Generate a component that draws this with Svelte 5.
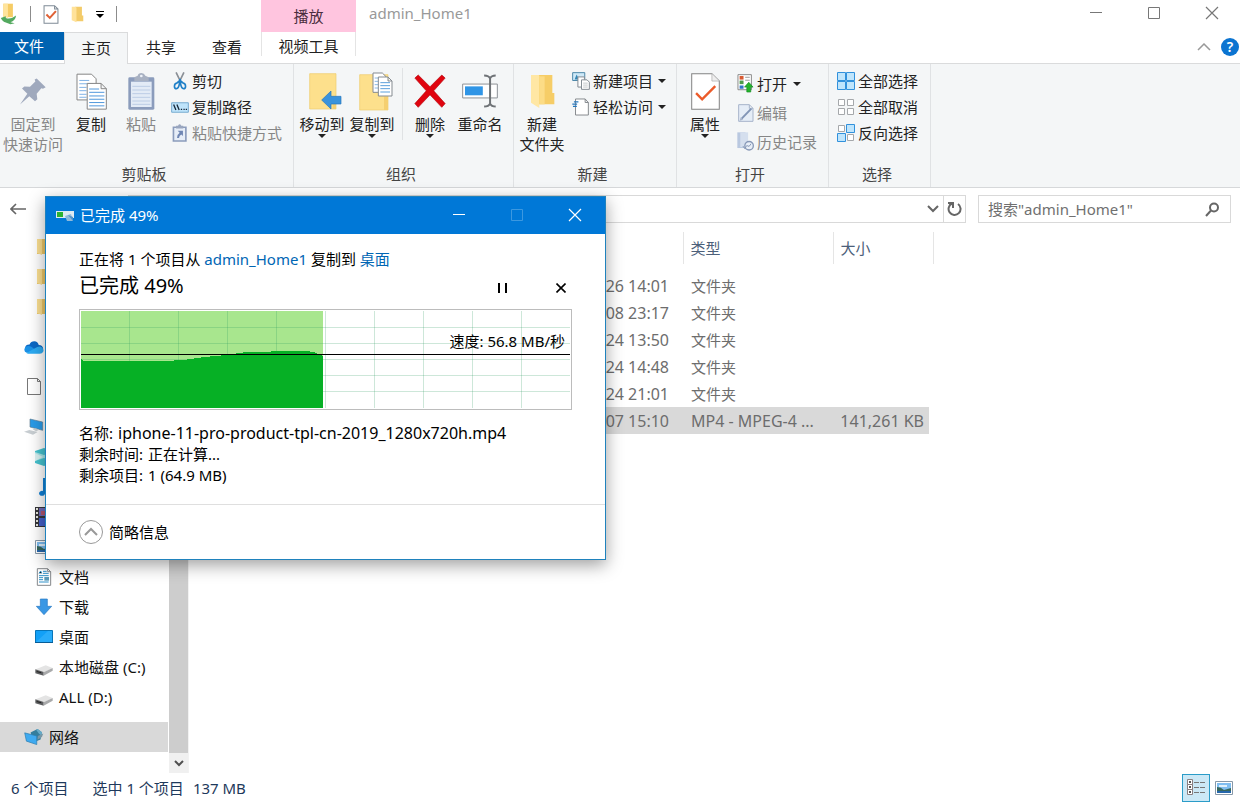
<script>
  const quickItems = ['folder', 'folder', 'folder'];
  const pcItems = [
    { icon: 'cube' },
    { icon: 'music' },
    { icon: 'video' },
    { icon: 'picture' },
    { icon: 'document', label: '文档' },
    { icon: 'download', label: '下载' },
    { icon: 'desktop', label: '桌面' },
    { icon: 'drive', label: '本地磁盘 (C:)' },
    { icon: 'drive', label: 'ALL (D:)' }
  ];
  const files = [
    { date: '26 14:01', type: '文件夹', size: '' },
    { date: '08 23:17', type: '文件夹', size: '' },
    { date: '24 13:50', type: '文件夹', size: '' },
    { date: '24 14:48', type: '文件夹', size: '' },
    { date: '24 21:01', type: '文件夹', size: '' },
    { date: '07 15:10', type: 'MP4 - MPEG-4 ...', size: '141,261 KB', selected: true }
  ];
  const gridX = [48, 97, 146, 195, 244, 293, 342, 391, 440];
  const gridY = [16, 32, 48, 64, 80];
</script>

{#snippet large(icon, lines, opts = {})}
  <button class="large" class:wide={opts.wide} class:off={opts.off} disabled={opts.off}>
    <span class="large-icon">{@render glyph(icon)}</span>
    {#each lines as line}<span class="line">{line}</span>{/each}
    {#if opts.menu}<span class="caret"></span>{/if}
  </button>
{/snippet}

{#snippet small(icon, label, opts = {})}
  <button class="small" class:off={opts.off} disabled={opts.off}>
    <span class="small-icon">{@render glyph(icon)}</span>
    <span>{label}</span>
    {#if opts.menu}<span class="caret side"></span>{/if}
  </button>
{/snippet}

{#snippet glyph(name)}
  {#if name === 'pin'}
    <svg width="26" height="27" viewBox="60 40 78 80"><path fill="#9fa9bd" d="M110 41 137 67l-8 5-5-2-14 17 2 16-7 6-17-15-28 25 22-32-16-16 7-6 17 1 16-16-2-6z" /></svg>
  {:else if name === 'copy'}
    <svg width="31" height="37" viewBox="226 25 94 111">
      <path fill="#fff" stroke="#858585" stroke-width="3" d="M229 28h44l14 14v64h-58z" />
      <path stroke="#7fb2e6" stroke-width="3" d="M236 47h30M236 57h43M236 68h22M236 78h22M236 89h22M236 98h22" />
      <path fill="#fff" stroke="#858585" stroke-width="3" d="M260 56h42l16 16v62h-58zM302 56v16h16" />
      <path stroke="#4f97dc" stroke-width="3" d="M266 73h30M266 83h46M266 94h46M266 104h46M266 114h46M266 124h46" />
    </svg>
  {:else if name === 'paste'}
    <svg width="27" height="37" viewBox="383 24 81 111">
      <rect x="384" y="37" width="78" height="97" rx="4" fill="#8b9cbc" />
      <path fill="#e3ebf6" d="M392 50h62v76h-62z" />
      <path stroke="#bccde5" stroke-width="3" d="M396 64h54M396 75h54M396 86h54M396 97h54M396 108h54M396 118h54" />
      <path fill="#a8b1c2" d="M402 48V37l10-5q2-8 11-8t12 8l10 5v11z" /><circle cx="423" cy="33" r="4" fill="#eef2f8" />
    </svg>
  {:else if name === 'cut'}
    <svg width="16" height="18" viewBox="514 25 46 55" fill="none">
      <path stroke="#8a8f96" stroke-width="5" d="M525 26l16 33M549 26l-16 33" />
      <path stroke="#1f80c8" stroke-width="5" d="M536 51l-9 8q-7 1-7 10 0 7 6 7 7-1 9-14zM538 51l9 8q7 1 7 10 0 7-6 7-7-1-9-14z" />
    </svg>
  {:else if name === 'path'}
    <svg width="18" height="11" viewBox="509 114 55 33">
      <path fill="#bfe4fb" stroke="#75a9cf" stroke-width="3" d="M511 116h51v29h-51z" />
      <path stroke="#16283a" stroke-width="4" d="M517 121l7 17M527 121l7 17M539 136h4M547 136h4M554 136h4" />
    </svg>
  {:else if name === 'shortcut'}
    <svg width="15" height="18" viewBox="514 180 45 55">
      <path fill="#e6edf7" stroke="#8b9cbc" stroke-width="5" d="M518 190h38v42h-38z" />
      <path fill="#99a6bf" d="M526 194v-9h6q5-9 10 0h6v9z" />
      <path fill="#6f86b3" d="M531 201h16v16l-5-5q-7 4-7 11h-6q0-11 8-16z" />
    </svg>
  {:else if name === 'move'}
    <svg width="40" height="37" viewBox="38 26 120 111">
      <path fill="#fde08c" stroke="#efcb6c" stroke-width="2" d="M61 28h79v106H61z" /><path fill="#f5cf70" d="M130 98h10v36h-10z" />
      <path fill="#3a93dc" stroke="#2877bb" stroke-width="2" d="M97 107l28-27v16h30v23h-30v15z" />
    </svg>
  {:else if name === 'copyto'}
    <svg width="41" height="39" viewBox="188 20 123 117">
      <path fill="#fde08c" stroke="#efcb6c" stroke-width="2" d="M211 28h85v106h-85z" /><path fill="#f5cf70" d="M284 94h12v40h-12z" />
      <path fill="#fff" stroke="#858b91" stroke-width="3" d="M251 23h28l11 11v47h-39z" />
      <path stroke="#8ab8e4" stroke-width="3" d="M256 38h22M256 48h12M256 58h12M256 68h12" />
      <path fill="#fff" stroke="#858b91" stroke-width="3" d="M267 35h29l12 12v45h-41zM296 35v12h12" />
      <path stroke="#5b9fdb" stroke-width="3" d="M273 52h29M273 61h29M273 70h29M273 80h29" />
    </svg>
  {:else if name === 'delete'}
    <svg width="32" height="34" viewBox="376 31 94 101"><path fill="#e0040f" stroke="#b80a12" stroke-width="2" d="M388 34l35 35 35-35 10 9-34 38 34 38-10 11-35-37-35 37-10-11 34-38-34-38z" /></svg>
  {:else if name === 'rename'}
    <svg width="36" height="34" viewBox="519 29 109 102" fill="none">
      <path fill="#fff" stroke="#8c9196" stroke-width="3" d="M521 59h105v42H521z" /><path fill="#2f95e6" d="M528 66h54v27h-54z" />
      <path stroke="#6e7276" stroke-width="6" d="M586 33q14 0 18 9 4-9 17-9M604 40v80M586 127q14 0 18-9 4 9 17 9" />
    </svg>
  {:else if name === 'newfolder'}
    <svg width="25" height="35" viewBox="57 31 75 105">
      <path fill="#f6cd67" d="M82 34h42v54h6v34H82z" /><path fill="#ffe7a4" d="M60 34h22q3 0 3 4v95l-25-16z" /><path fill="#fcdc86" d="M85 38h16v84H85z" />
    </svg>
  {:else if name === 'newitem'}
    <svg width="18" height="18" viewBox="186 23 55 55">
      <path fill="#cfe9f8" stroke="#4b87a8" stroke-width="3" d="M188 25h37v24h-37z" /><path fill="#3487b5" d="M194 46l6-15 8 15z" />
      <path fill="#fff" stroke="#838b92" stroke-width="3" d="M204 38h20v31h-20z" />
      <path fill="#fff" stroke="#838b92" stroke-width="3" d="M215 47h17l7 7v22h-24z" /><path stroke="#a8adb2" stroke-width="2" d="M220 57h14M220 63h14M220 69h14" />
    </svg>
  {:else if name === 'easy'}
    <svg width="17" height="18" viewBox="183 102 53 54">
      <path fill="#fff" stroke="#83878b" stroke-width="3" d="M194 104h30l10 11v39h-40zM224 104v11h10" /><path stroke="#2477bd" stroke-width="4" d="M189 113h14M184 120h15M186 127h12" />
    </svg>
  {:else if name === 'props'}
    <svg width="29" height="37" viewBox="35 26 86 110"><path fill="#fff" stroke="#838383" stroke-width="3" d="M37 28h60l22 22v84H37z" /><path fill="#eee" stroke="#aaa" stroke-width="2" d="M97 28v22h22" /><path fill="none" stroke="#ec5b2a" stroke-width="7" d="M50 86l18 18 39-39" /></svg>
  {:else if name === 'open'}
    <svg width="17" height="19" viewBox="170 33 50 58">
      <path fill="#fff" stroke="#8a8a8a" stroke-width="3" d="M172 35h41v46h-41z" /><path fill="#d85a32" d="M177 39h12v11h-12z" /><path fill="#4b9b49" d="M177 53h12v11h-12z" /><path fill="#3474c8" d="M177 68h12v10h-12z" />
      <path stroke="#999" stroke-width="3" d="M194 43h14M194 52h14" /><path fill="#24b32c" stroke="#138e20" stroke-width="2" d="M205 58l13 15h-7v15h-12V73h-7z" />
    </svg>
  {:else if name === 'edit'}
    <svg width="16" height="18" viewBox="170 120 48 54"><path fill="#e5edf7" stroke="#a7b4ca" stroke-width="3" d="M172 122h32l11 11v39h-43zM204 122v11h11" /><path stroke="#8195b6" stroke-width="6" d="M181 164l29-30" /><path fill="#a7b4ca" d="M175 170l3-10 7 7z" /></svg>
  {:else if name === 'history'}
    <svg width="17" height="19" viewBox="170 207 52 58"><path fill="#b9c8e0" d="M171 208h25v48h-25z" /><path fill="#d5dfee" d="M180 208h24v45h-24z" /><circle cx="207" cy="249" r="13" fill="#e9eff7" stroke="#8798b7" stroke-width="4" /><path fill="none" stroke="#8798b7" stroke-width="3" d="M199 248l8 3 6-8M188 250l6 8 5-8" /></svg>
  {:else if name === 'selall'}
    <svg width="18" height="18" viewBox="0 0 18 18" fill="#bfe5fc" stroke="#3191dc"><path d="M.5.5h8v8h-8zM9.500.5h8v8h-8zM.5 9.500h8v8h-8zM9.500 9.500h8v8h-8z" /></svg>
  {:else if name === 'selnone'}
    <svg width="18" height="18" viewBox="0 0 18 18" fill="#fff" stroke="#a5a8ab"><path d="M1.500 1.500h6v6h-6zM10.500 1.500h6v6h-6zM1.500 10.500h6v6h-6zM10.500 10.500h6v6h-6z" /></svg>
  {:else if name === 'selinv'}
    <svg width="18" height="18" viewBox="0 0 18 18"><path fill="#fff" stroke="#a5a8ab" d="M1.500 1.500h6v6h-6zM10.500 10.500h6v6h-6z" /><path fill="#bfe5fc" stroke="#3191dc" d="M9.500.5h8v8h-8zM.5 9.500h8v8h-8z" /></svg>
  {:else if name === 'folder'}
    <svg width="18" height="18" viewBox="0 0 18 18"><path fill="#edc768" d="M2 1h13v15H2z" /><path fill="#fbdf91" d="M2 1h5v16l-5-2z" /></svg>
  {:else if name === 'cube'}
    <svg width="18" height="18" viewBox="0 0 18 18"><path fill="#46c3cf" d="M0 3l9-3 9 3v12l-9 3-9-3z" /><path fill="#a4e6e8" d="M0 4l9 3 9-3v9l-9-3-9 3z" /><path fill="#d9f1f2" d="M0 5l8 4-8 4z" /></svg>
  {:else if name === 'music'}
    <svg width="18" height="18" viewBox="0 0 18 18"><path fill="#0f80d7" d="M8 0h2q0 4 5 7v4q-3-4-5-4v8a3 2.500 0 1 1-2-2z" /></svg>
  {:else if name === 'video'}
    <svg width="18" height="20" viewBox="0 0 18 20"><path fill="#37373b" d="M0 0h18v20H0z" /><path fill="#6f69b5" d="M4 1h10v8H4z" /><path fill="#4560c9" d="M4 11h10v8H4z" /><path fill="#b1556e" d="M6 4h5v4H6z" /><path stroke="#e6e6dd" stroke-width="2" stroke-dasharray="2 2" d="M2 1v18M16 1v18" /></svg>
  {:else if name === 'picture'}
    <svg width="18" height="14" viewBox="0 0 18 14"><path fill="#fff" stroke="#8798a8" d="M.5.5h17v13H.5z" /><path fill="#7fbdf0" d="M2 2h14v10H2z" /><path fill="#dff0fb" d="M4 4h8v2H4z" /><path fill="#37675c" d="M2 6q4 0 7 3l7-2v3H2z" /><path fill="#2667ac" d="M2 10h14v2H2z" /></svg>
  {:else if name === 'document'}
    <svg width="18" height="18" viewBox="107 24 50 54"><path fill="#fff" stroke="#85898c" stroke-width="3" d="M112 26h31l9 9v41h-40zM143 26v9h9" /><path stroke="#2e91c9" stroke-width="3" d="M117 40l5-7 3 7M129 34h11M129 40h17M117 47h29M117 53h12M117 59h12M117 66h29" /><path fill="#5b9bb9" d="M133 51h14v11h-14z" /></svg>
  {:else if name === 'download'}
    <svg width="18" height="18" viewBox="105 116 54 52"><path fill="#3a97e4" stroke="#2678c2" stroke-width="2" d="M121 118h21v22h13l-23 25-23-25h12z" /></svg>
  {:else if name === 'desktop'}
    <svg width="18" height="14" viewBox="0 0 18 14"><path fill="#12a0f7" stroke="#0875b8" d="M.5.5h17v12H.5z" /><path fill="#48bafc" d="M1 12L13 1h4v11z" opacity=".45" /><path stroke="#075c96" d="M0 12.500h18" /></svg>
  {:else if name === 'drive'}
    <svg class="drop" width="18" height="11" viewBox="105 318 54 33"><path fill="#e4e4e4" d="M107 331l30-12 21 8-28 14z" /><path fill="#5f6062" d="M106 331l25 8v11l-25-7z" /><path fill="#a9aaab" d="M131 340l27-13v8l-27 15z" /><path fill="#222" d="M110 336l14 4v3l-14-4z" /></svg>
  {:else if name === 'network'}
    <svg width="20" height="18" viewBox="73 503 58 52"><path fill="#347e9c" d="M92 516l20-10 13 9-4 21-20 8z" /><path fill="#67abc8" d="M108 508l5-2 12 9v12l-9-8z" /><path fill="#3faaf0" stroke="#2d7daf" stroke-width="2" d="M75 517l35 9v25l-30-10z" /><path fill="#7a97a6" d="M113 526l16-7-4 10-13 8z" /></svg>
  {:else if name === 'cloud'}
    <svg width="20" height="13" viewBox="71 449 62 41"><path fill="#0b68c5" d="M74 474q-1-14 14-14 4-10 15-10 11 1 14 12 13 0 14 12l-28 10z" /><path fill="#1b91e6" d="M79 486q-9-2-7-12 3-10 14-9 7 0 12 5l20 15z" /><path fill="#2dabf2" d="M78 487l27-15q14-10 23-2 6 6 3 13-3 6-11 6H83z" /></svg>
  {:else if name === 'page'}
    <svg width="20" height="20" viewBox="0 0 20 20"><path fill="#fff" stroke="#777" d="M3.500 1.500h10l3 3v13h-13zM13.500 1.500v3h3" /></svg>
  {:else if name === 'pc'}
    <svg width="20" height="18" viewBox="76 149 60 52"><path fill="#2a9be8" stroke="#5d7d93" stroke-width="2" d="M94 151l38 9v25l-38-10z" /><path fill="#c8ced2" d="M102 182l8-3 12 4-10 5zM76 189l16-5 25 6-14 8z" /></svg>
  {/if}
{/snippet}

{#snippet winIcon(kind)}
  <svg width="14" height="14" viewBox="0 0 14 14" fill="none" stroke="currentColor">
    {#if kind === 'min'}<path d="M1 6.500h12" />{:else if kind === 'max'}<path d="M1.500 1.500h11v11h-11z" />{:else}<path d="M1 1l12 12M13 1L1 13" stroke-width="1.200" />{/if}
  </svg>
{/snippet}

<div class="window">
  <header>
    <div class="quick">
      <svg width="18" height="22" viewBox="4 8 50 62"><path fill="#f6cc65" d="M13 10h27v38H13z" /><path fill="#ffe49c" d="M13 10h13v40l-13-4z" /><path fill="#53a95f" d="M6 50l14-5v5q14 5 29-7-2 15-16 19l12 3-12 3-13-5q-9-2-14-13z" /></svg>
      <i class="bar"></i>
      <button aria-label="属性"><svg width="16" height="19" viewBox="131 14 45 56"><path fill="#fff" stroke="#7f8b96" stroke-width="3" d="M133 16h31l10 10v42h-41zM164 16v10h10" /><path fill="none" stroke="#df6135" stroke-width="6" d="M140 42l10 10 18-20" /></svg></button>
      <button aria-label="新建文件夹"><svg width="13" height="17" viewBox="209 17 38 50"><path fill="#f3cb69" d="M221 19h20v26h4v17h-24z" /><path fill="#ffe29a" d="M211 19h10q4 0 4 4v42l-14-6z" /></svg></button>
      <button aria-label="自定义"><svg width="8" height="7" viewBox="0 0 8 7"><path d="M0 0h8v1H0zM0 3h8L4 7z" /></svg></button>
      <i class="bar"></i>
    </div>
    <div class="context">播放</div>
    <h1>admin_Home1</h1>
    <div class="controls">
      <button aria-label="最小化">{@render winIcon('min')}</button>
      <button aria-label="最大化">{@render winIcon('max')}</button>
      <button aria-label="关闭">{@render winIcon('close')}</button>
    </div>
  </header>

  <nav class="tabs">
    <button class="file">文件</button>
    <button class="active">主页</button>
    <button>共享</button>
    <button>查看</button>
    <button class="tool">视频工具</button>
    <div class="help">
      <button aria-label="折叠"><svg width="14" height="8" viewBox="0 0 14 8" fill="none" stroke="#999" stroke-width="1.500"><path d="M1 7l6-6 6 6" /></svg></button>
      <button class="round">?</button>
    </div>
  </nav>

  <section class="ribbon">
    <div class="group g1">
      <div class="tools">
        {@render large('pin', ['固定到', '快速访问'], { off: true, wide: true })}
        {@render large('copy', ['复制'])}
        {@render large('paste', ['粘贴'], { off: true })}
        <div class="stack">
          {@render small('cut', '剪切')}
          {@render small('path', '复制路径')}
          {@render small('shortcut', '粘贴快捷方式', { off: true })}
        </div>
      </div>
      <div class="caption">剪贴板</div>
    </div>
    <div class="group g2">
      <div class="tools inset">
        {@render large('move', ['移动到'], { menu: true })}
        {@render large('copyto', ['复制到'], { menu: true })}
        <i class="split"></i>
        {@render large('delete', ['删除'], { menu: true })}
        {@render large('rename', ['重命名'])}
      </div>
      <div class="caption">组织</div>
    </div>
    <div class="group g3">
      <div class="tools inset">
        {@render large('newfolder', ['新建', '文件夹'])}
        <div class="stack">
          {@render small('newitem', '新建项目', { menu: true })}
          {@render small('easy', '轻松访问', { menu: true })}
        </div>
      </div>
      <div class="caption">新建</div>
    </div>
    <div class="group g4">
      <div class="tools inset">
        {@render large('props', ['属性'], { menu: true })}
        <div class="stack loose">
          {@render small('open', '打开', { menu: true })}
          {@render small('edit', '编辑', { off: true })}
          {@render small('history', '历史记录', { off: true })}
        </div>
      </div>
      <div class="caption">打开</div>
    </div>
    <div class="group g5">
      <div class="tools">
        <div class="stack">
          {@render small('selall', '全部选择')}
          {@render small('selnone', '全部取消')}
          {@render small('selinv', '反向选择')}
        </div>
      </div>
      <div class="caption">选择</div>
    </div>
  </section>

  <div class="address">
    <button class="back" aria-label="返回"><svg width="16" height="12" viewBox="0 0 16 12" fill="none" stroke="#666" stroke-width="1.600"><path d="M1 6h15M6 1L1 6l5 5" /></svg></button>
    <div class="location">
      <button aria-label="展开"><svg width="12" height="8" viewBox="0 0 12 8" fill="none" stroke="#666" stroke-width="2"><path d="M1 1l5 5 5-5" /></svg></button>
      <button class="reload" aria-label="刷新"><svg width="16" height="16" viewBox="0 0 16 16" fill="none" stroke="#666" stroke-width="2"><path d="M11 3a6 6 0 1 1-6-.5M1 2h5v5" /></svg></button>
    </div>
    <label class="search">
      <input type="text" placeholder={'搜索"admin_Home1"'} aria-label="搜索" />
      <svg width="15" height="15" viewBox="0 0 15 15" fill="none" stroke="#666" stroke-width="2"><circle cx="9" cy="5.500" r="4" /><path d="M6 8.500L1 14" /></svg>
    </label>
  </div>

  <main>
    <aside>
      <ul>
        {#each quickItems as icon}<li>{@render glyph(icon)}</li>{/each}
        <li class="top">{@render glyph('cloud')}</li>
        <li class="top">{@render glyph('page')}</li>
        <li class="top">{@render glyph('pc')}</li>
        {#each pcItems as item}<li>{@render glyph(item.icon)}{#if item.label}<span>{item.label}</span>{/if}</li>{/each}
        <li class="top current">{@render glyph('network')}<span>网络</span></li>
      </ul>
      <div class="scroll">
        <i></i>
        <button aria-label="向下"><svg width="10" height="7" viewBox="0 0 10 7" fill="none" stroke="#505050" stroke-width="2"><path d="M1 1l4 4 4-4" /></svg></button>
      </div>
    </aside>
    <div class="files">
      <table>
        <colgroup><col class="c-name" /><col class="c-date" /><col class="c-type" /><col class="c-size" /></colgroup>
        <thead><tr><th></th><th></th><th>类型</th><th>大小</th></tr></thead>
        <tbody>
          {#each files as f}
            <tr class:selected={f.selected}><td></td><td class="date">{f.date}</td><td class:latin={f.selected}>{f.type}</td><td class="num">{f.size}</td></tr>
          {/each}
        </tbody>
      </table>
    </div>
  </main>

  <footer>
    <span>6 个项目</span>
    <span>选中 1 个项目</span>
    <span class="bytes">137 MB</span>
    <div class="views">
      <button class="on" aria-label="详细信息"><svg width="18" height="17" viewBox="0 0 18 17" fill="none"><path fill="#fff" stroke="#8a7f80" d="M.5.5h5v5h-5zM.5 5.500h5v5h-5zM.5 10.500h5v5h-5z" /><path fill="#555" d="M2 2h2v2H2zM2 7h2v2H2zM2 12h2v2H2z" /><path stroke="#777" d="M7 3.500h5M13 3.500h5M7 8.500h5M13 8.500h5M7 13.500h5M13 13.500h5" /></svg></button>
      <button aria-label="缩略图">{@render glyph('picture')}</button>
    </div>
  </footer>

  <div class="dialog" role="dialog" aria-labelledby="progress-title">
    <div class="dialog-bar">
      <svg width="18" height="12" viewBox="0 0 18 12"><path fill="#dceaf2" d="M0 2h18v7H0z" /><path fill="#2bb233" d="M1 3h6v5H1z" /><path fill="#8db9dc" d="M9 7l6-2 2 7h-6z" /><path fill="#4f93ca" d="M12 6l5 2v4z" /></svg>
      <span id="progress-title">已完成 49%</span>
      <div class="controls">
        <button aria-label="最小化">{@render winIcon('min')}</button>
        <button class="dim" aria-label="最大化" disabled>{@render winIcon('max')}</button>
        <button aria-label="关闭">{@render winIcon('close')}</button>
      </div>
    </div>
    <div class="dialog-body">
      <p>正在将 1 个项目从 <a href="#source">admin_Home1</a> 复制到 <a href="#target">桌面</a></p>
      <div class="status">
        <h2>已完成 49%</h2>
        <button aria-label="暂停"><svg width="10" height="10" viewBox="0 0 10 10"><path d="M0 0h2v10H0zM7 0h2v10H7z" /></svg></button>
        <button aria-label="取消"><svg width="10" height="10" viewBox="0 0 10 10" fill="none" stroke="#000" stroke-width="1.600"><path d="M.5.5l9 9M9.500.5l-9 9" /></svg></button>
      </div>
      <div class="chart">
        <svg viewBox="0 0 489 97" preserveAspectRatio="none" shape-rendering="crispEdges">
          <path fill="#a8e68e" d="M0 0h242v97H0z" />
          <g stroke="#2f9b62" stroke-opacity=".24">
            {#each gridX as x}<path d="M{x}.5 0v97" />{/each}
            {#each gridY as y}<path d="M0 {y}.5h489" />{/each}
          </g>
          <path fill="#06b025" d="M0 48l3 2h80l20-1 20-3 22-2 20-3h15l20-1h25l8 1 9 4v52H0z" />
          <path stroke="#000" d="M0 43.500h489" />
        </svg>
        <span>速度: 56.8 MB/秒</span>
      </div>
      <dl>
        <div><dt>名称:</dt><dd class="latin">iphone-11-pro-product-tpl-cn-2019_1280x720h.mp4</dd></div>
        <div><dt>剩余时间:</dt><dd>正在计算...</dd></div>
        <div><dt>剩余项目:</dt><dd>1 (64.9 MB)</dd></div>
      </dl>
    </div>
    <button class="less">
      <svg width="24" height="24" viewBox="0 0 24 24" fill="none" stroke="#999"><circle cx="12" cy="12" r="11.500" /><path stroke-width="2" d="M6 15l6-6 6 6" /></svg>
      简略信息
    </button>
  </div>
</div>

<style>
  :global(body) { margin: 0; }
  .window, button, input { font-family: "Noto Sans", "Noto Sans CJK SC", sans-serif; font-size: 15px; line-height: 20px; }
  .window { position: relative; display: flex; flex-direction: column; min-height: 100vh; background: #fff; color: #222; white-space: nowrap; overflow: hidden; }
  button { border: 0; padding: 0; margin: 0; background: none; color: inherit; }
  svg { display: block; flex: none; }
  h1, h2, p, ul, dl, dd { margin: 0; padding: 0; font-weight: 400; }

  header { display: flex; height: 32px; }
  .quick { display: flex; align-items: center; gap: 12px; width: 261px; height: 28px; box-sizing: border-box; }
  .bar { width: 1px; height: 16px; background: #8c8c8c; }
  .context { width: 95px; line-height: 32px; text-align: center; background: #ffc5df; color: #4a2e3d; }
  h1 { margin-left: 13px; font-size: 15px; line-height: 26px; color: #999; }
  .controls { display: flex; margin-left: auto; }
  .controls button { display: grid; place-items: center; width: 58px; height: 26px; color: #777; }
  header .controls { margin-right: -1px; }

  .tabs { display: flex; height: 31px; border-bottom: 1px solid #dadbdc; }
  .tabs > button { width: 66px; padding-bottom: 1px; line-height: 28px; }
  .tabs > .file { width: 64px; height: 28px; box-sizing: border-box; padding: 0 6px 0 0; background: #0063b1; color: #fff; }
  .tabs > .active { width: 64px; height: 32px; box-sizing: border-box; border: 1px solid #dadbdc; border-bottom: 0; padding-bottom: 2px; background: #f4f6f7; }
  .tabs > .tool { width: 95px; height: 24px; margin-left: 1px; box-sizing: border-box; padding: 0; border: solid #e4e4e4; border-width: 0 1px; }
  .help { display: flex; align-items: center; gap: 10px; margin-left: auto; padding: 0 1px 2px 0; }
  .help .round { width: 18px; height: 18px; border-radius: 50%; background: #0b74d1; color: #fff; font-size: 14px; line-height: 18px; font-weight: 600; }

  .ribbon { display: flex; background: #f4f6f7; border-bottom: 1px solid #d6d8da; }
  .group { display: flex; flex-direction: column; box-sizing: border-box; height: 123px; padding-bottom: 3px; border-right: 1px solid #e0e2e4; }
  .g1 { width: 294px; }
  .g2 { width: 220px; }
  .g3 { width: 163px; }
  .g4 { width: 152px; }
  .g5 { width: 102px; }
  .tools { display: flex; flex: 1; }
  .inset { padding-left: 3px; }
  .caption { text-align: center; color: #444; padding-right: 5px; }
  .large { display: flex; flex-direction: column; align-items: center; width: 50px; padding-top: 7px; }
  .large.wide { width: 66px; }
  .large-icon { display: grid; place-items: center; height: 40px; margin-bottom: 3px; }
  .off { color: #868686; }
  .caret { border: 4px solid transparent; border-top-color: #222; border-bottom: 0; }
  .caret.side { margin-left: 2px; }
  .split { width: 1px; height: 72px; margin: 4px 2px 0 5px; background: #e0e2e4; }
  .stack { display: flex; flex-direction: column; align-items: flex-start; padding: 4px 0 0 4px; }
  .g5 .stack { padding-left: 7px; }
  .small { display: flex; align-items: center; gap: 3px; height: 26px; }
  .small-icon { display: grid; place-items: center; width: 19px; }
  .stack.loose { padding: 5px 0 0 6px; }
  .loose .small { height: 29px; gap: 2px; }
  .loose .caret { margin-left: 4px; }

  .address { display: flex; align-items: center; box-sizing: border-box; height: 43px; padding-bottom: 1px; }
  .back { display: grid; place-items: center; width: 35px; }
  .location, .search { display: flex; align-items: center; box-sizing: border-box; height: 28px; border: 1px solid #d9d9d9; }
  .location { flex: 1; justify-content: flex-end; margin: 0 12px 0 93px; }
  .location button { display: grid; place-items: center; width: 20px; height: 26px; }
  .location .reload { width: 22px; border-left: 1px solid #d9d9d9; }
  .search { width: 253px; margin-right: 9px; padding: 0 10px 0 9px; }
  input { flex: 1; min-width: 0; border: 0; padding: 0; outline: 0; background: none; }
  input::placeholder { color: #707070; opacity: 1; }

  main { display: flex; flex: 1; padding-top: 1px; }
  aside { display: flex; width: 188px; border-right: 1px solid #f2f2f2; color: #111; }
  ul { flex: 1; list-style: none; }
  li { display: flex; align-items: center; gap: 6px; height: 30px; padding-left: 35px; }
  li.top { padding-left: 24px; margin: 10px 0; gap: 5px; }
  li.top + li.top { margin-top: 0; }
  li.top:has(+ li:not(.top)) { margin-bottom: 0; }
  .current { background: #d9d9d9; }
  li :global(.drop) { margin-top: 7px; }
  .scroll { display: flex; flex-direction: column; width: 19px; margin-left: 1px; background: #cdcdcd; }
  .scroll i { flex: 1; }
  .scroll button { display: grid; place-items: center; height: 20px; background: #f0f0f0; }

  .files { flex: 1; padding-left: 10px; }
  table { table-layout: fixed; width: 734px; border-collapse: collapse; }
  .c-name { width: 327px; }
  .c-date { width: 157px; }
  .c-type { width: 150px; }
  .c-size { width: 100px; }
  th { height: 32px; padding: 0 0 0 7px; border-right: 1px solid #e5e5e5; text-align: left; font-weight: 400; color: #4c607a; }
  td { height: 27px; padding: 0 0 0 8px; color: #6d6d6d; }
  .latin, .date, .num { font-size: 16px; }
  td.date { padding: 0 14px 0 0; text-align: right; }
  tbody::before { content: ""; display: block; height: 8px; }
  td.num { padding: 0 9px 0 0; text-align: right; }
  .selected td { background: #d9d9d9; }
  .selected td.num { background: linear-gradient(to left, #fff 4px, #d9d9d9 4px); }

  footer { display: flex; align-items: center; height: 29px; padding: 0 2px 0 11px; gap: 24px; color: #1e395b; }
  .bytes { margin-left: -15px; }
  .views { display: flex; margin-left: auto; }
  .views button { display: grid; place-items: center; width: 28px; height: 28px; }
  .views .on { box-sizing: border-box; border: 1px solid #2a9cc8; background: #cbe8f6; }

  .dialog { position: absolute; left: 45px; top: 196px; width: 559px; border: 1px solid #1f82bd; background: #fff; color: #000; box-shadow: 0 5px 16px rgba(0, 0, 0, .38); }
  .dialog-bar { display: flex; align-items: center; gap: 6px; box-sizing: border-box; height: 37px; padding: 0 1px 2px 10px; background: #0078d7; color: #fff; }
  .dialog-bar .controls button { color: #fff; }
  .dialog-bar .controls .dim { color: #3c98e0; }
  .dialog-body { padding: 15px 33px 18px; }
  a { color: #0066b4; text-decoration: none; }
  .status { display: flex; align-items: flex-end; height: 34px; margin-bottom: 6px; }
  .status h2 { flex: 1; font-size: 20px; line-height: 34px; }
  .status button { display: grid; place-items: center; width: 22px; height: 30px; margin-left: 36px; }
  .chart { position: relative; border: 1px solid #bcbcbc; padding: 1px; height: 97px; }
  .chart svg { width: 100%; height: 100%; }
  .chart span { position: absolute; right: 6px; top: 21px; }
  dl { padding-top: 13px; line-height: 21px; }
  dl div { display: flex; gap: 5px; height: 21px; }
  .less { display: flex; align-items: center; gap: 6px; width: 100%; height: 55px; padding-left: 33px; border-top: 1px solid #dfdfdf; }
</style>
